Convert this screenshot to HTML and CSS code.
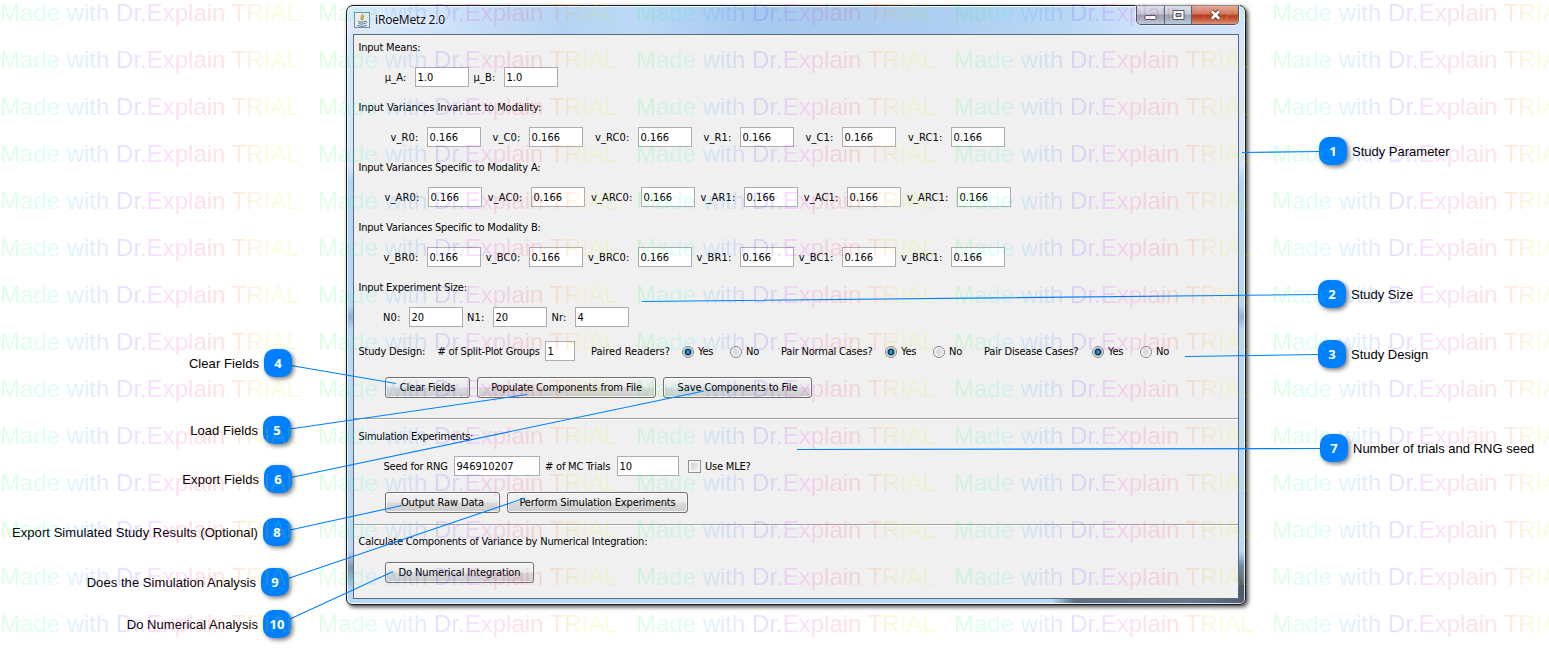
FILE: index.html
```html
<!DOCTYPE html>
<html lang="en">
<head>
<meta charset="utf-8">
<title>iRoeMetz 2.0</title>
<link rel="stylesheet" href="styles.css">
</head>
<body>
<main class="stage">
  <section class="window">
    <header class="titlebar">
      <svg class="java-icon" viewBox="0 0 16 16" width="16" height="16">
        <rect x=".5" y=".5" width="15" height="15" fill="#eceeef" stroke="#7d8b99"/>
        <path d="M8.500 2C9 4 5.500 5 7.500 8M10.500 3.500C8 5 9.500 6.500 8.500 8" fill="none" stroke="#e08a28" stroke-width="1.300"/>
        <path d="M4 9.500c2 .8 5 .8 7 0M4.500 11.500c2 .8 4 .8 6 0M3 13.500c3 1 7 1 10 0M11 9.500c2.500-.5 2 1.800-.2 2.200" fill="none" stroke="#4b7194"/>
      </svg>
      <span class="title">iRoeMetz 2.0</span>
      <div class="controls">
        <span class="control min"><svg width="13" height="13"><rect x="1" y="6.500" width="11" height="4" rx="1" fill="#fff" stroke="#53575f"/></svg></span>
        <span class="control max"><svg width="13" height="13"><path d="M1 1.500h11v9H1z" fill="#fff" stroke="#53575f"/><path d="M4 4.500h5v3H4z" fill="#aab6c6" stroke="#53575f"/></svg></span>
        <span class="control close"><svg width="13" height="13"><path d="M2.500 2l8 8M10.500 2l-8 8" stroke="#5a3d42" stroke-width="4.600"/><path d="M2.800 2.300l7.400 7.400M10.200 2.300l-7.400 7.400" stroke="#fff" stroke-width="2.700"/></svg></span>
      </div>
    </header>
    <div class="client">
      <h2 class="heading"><span>Input Means:</span></h2>
      <div class="row means"><label>μ_A:</label><span class="field">1.0</span><label>μ_B:</label><span class="field">1.0</span></div>
      <h2 class="heading wide"><span>Input Variances Invariant to Modality:</span></h2>
      <div class="row invariant"><label>v_R0:</label><span class="field">0.166</span><label>v_C0:</label><span class="field">0.166</span><label>v_RC0:</label><span class="field">0.166</span><label>v_R1:</label><span class="field">0.166</span><label>v_C1:</label><span class="field">0.166</span><label>v_RC1:</label><span class="field">0.166</span></div>
      <h2 class="heading"><span>Input Variances Specific to Modality A:</span></h2>
      <div class="row modality-a"><label>v_AR0:</label><span class="field">0.166</span><label>v_AC0:</label><span class="field">0.166</span><label>v_ARC0:</label><span class="field">0.166</span><label>v_AR1:</label><span class="field">0.166</span><label>v_AC1:</label><span class="field">0.166</span><label>v_ARC1:</label><span class="field">0.166</span></div>
      <h2 class="heading"><span>Input Variances Specific to Modality B:</span></h2>
      <div class="row modality-b"><label>v_BR0:</label><span class="field">0.166</span><label>v_BC0:</label><span class="field">0.166</span><label>v_BRC0:</label><span class="field">0.166</span><label>v_BR1:</label><span class="field">0.166</span><label>v_BC1:</label><span class="field">0.166</span><label>v_BRC1:</label><span class="field">0.166</span></div>
      <h2 class="heading"><span>Input Experiment Size:</span></h2>
      <div class="row size"><label>N0:</label><span class="field">20</span><label>N1:</label><span class="field">20</span><label>Nr:</label><span class="field">4</span></div>
      <div class="design">
        <span>Study Design:</span><span># of Split-Plot Groups</span><span class="field">1</span>
        <span class="question">Paired Readers?</span><i class="radio on"></i><span>Yes</span><i class="radio"></i><span>No</span>
        <span>Pair Normal Cases?</span><i class="radio on"></i><span>Yes</span><i class="radio"></i><span>No</span>
        <span>Pair Disease Cases?</span><i class="radio on"></i><span>Yes</span><i class="radio"></i><span>No</span>
      </div>
      <div class="buttons files"><span class="button clear">Clear Fields</span><span class="button populate">Populate Components from File</span><span class="button save">Save Components to File</span></div>
      <hr class="rule">
      <h2 class="heading sim"><span>Simulation Experiments:</span></h2>
      <div class="simulation"><span>Seed for RNG</span><span class="field">946910207</span><span class="trials"># of MC Trials</span><span class="field">10</span><i class="check"></i><span>Use MLE?</span></div>
      <div class="buttons runs"><span class="button output">Output Raw Data</span><span class="button perform">Perform Simulation Experiments</span></div>
      <hr class="rule">
      <h2 class="heading calc"><span>Calculate Components of Variance by Numerical Integration:</span></h2>
      <div class="buttons numeric"><span class="button integrate">Do Numerical Integration</span></div>
    </div>
  </section>

  <svg class="leaders" width="1549" height="649">
    <path d="M1242 152.500L1320 151.500M642 301.500L1319 294.500M1185 356.500L1319 354.500M797 449.500L1321 448.500M396 383.500L291 365.500M527 394.500L290 429M704 391L291 477.500M402 505.500L290 530M525 498L288 578.500M393 571.500L290 619"/>
  </svg>

  <div class="callout right c1"><b>1</b><span>Study Parameter</span></div>
  <div class="callout right c2"><b>2</b><span>Study Size</span></div>
  <div class="callout right c3"><b>3</b><span>Study Design</span></div>
  <div class="callout right c7"><b>7</b><span>Number of trials and RNG seed</span></div>
  <div class="callout left c4"><span>Clear Fields</span><b>4</b></div>
  <div class="callout left c5"><span>Load Fields</span><b>5</b></div>
  <div class="callout left c6"><span>Export Fields</span><b>6</b></div>
  <div class="callout left c8"><span>Export Simulated Study Results (Optional)</span><b>8</b></div>
  <div class="callout left c9"><span>Does the Simulation Analysis</span><b>9</b></div>
  <div class="callout left c10"><span>Do Numerical Analysis</span><b>10</b></div>

  <div class="watermark" id="watermark"></div>
</main>
<script src="watermark.js"></script>
</body>
</html>
```
FILE: watermark.js
```js
const layer = document.getElementById('watermark');
for (let i = 0; i < 14 * 5; i++) {
  const mark = document.createElement('span');
  mark.textContent = 'Made with Dr.Explain TRIAL';
  layer.appendChild(mark);
}
```
FILE: styles.css
```css
* { box-sizing: border-box; }
body { margin: 0; background: #fff; color: #000; }
.stage { position: relative; width: 1549px; height: 649px; overflow: hidden; padding: 5px 0 0 346px; }

.window {
  width: 900px; height: 600px; padding: 0 6px 5px;
  display: flex; flex-direction: column;
  border: 1px solid #16191d; border-radius: 7px 7px 6px 6px;
  background:
    linear-gradient(90deg, transparent 78.500%, #5e6e80 81%, #66788b 94%, #4f5f70 100%) bottom / 100% 7px no-repeat,
    linear-gradient(180deg, transparent 92%, #4b5c6b 97%) right / 8px 100% no-repeat,
    linear-gradient(90deg, #dcebf9 0, #cfe3f8 10%, #b4d3f4 24%, #bcd8f6 32%, #a6caef 45%, #abcdf0 63%, #b9d7f5 80%, #cfe4fb 90%, #cfe4fb 100%) top / 100% 28px no-repeat,
    linear-gradient(180deg, #d3e6fa 0, #d3e6fa 27%, #b3d6f8 29%, #b8d8f8 50%, #8fb0d4 52%, #b8d8f8 54%, #b8d8f8 91%, #7c98b5 94%, #b8d8f8 98%);
  box-shadow: inset 0 0 0 1px rgba(255,255,255,.8), 2px 2px 4px rgba(0,0,0,.75);
}
.titlebar { flex: none; height: 28px; display: flex; align-items: flex-start; padding-left: 1px; }
.java-icon { margin-top: 6px; }
.title { font: 12px/16px "Open Sans", sans-serif; margin: 6px 0 0 5px; letter-spacing: -.15px; text-shadow: 0 0 7px #fff, 0 0 7px #fff; }
.controls { margin-left: auto; width: 103px; height: 19px; display: flex; border: 1px solid #4c5565; border-top: 0; border-radius: 0 0 5px 5px; overflow: hidden; box-shadow: 0 0 0 1px rgba(255,255,255,.5); }
.control { display: flex; align-items: center; justify-content: center; background: linear-gradient(#d9e1eb 0, #c2ccd9 45%, #94a3b5 50%, #bccad9 100%); }
.min { width: 28px; border-right: 1px solid #596475; }
.max { width: 27px; border-right: 1px solid #596475; }
.close { flex: 1; background: linear-gradient(#e5a99e 0, #cf7465 45%, #b23420 50%, #c55a40 75%, #df9578 100%); }

.client { flex: 1; background: #f0f0f0; border: 1px solid #5c6a78; font: 11px/14px "DejaVu Sans Condensed", "DejaVu Sans", sans-serif; font-stretch: condensed; letter-spacing: -.2px; white-space: nowrap; overflow: hidden; }
.heading { margin: 0; height: 20px; padding: 6px 0 0 4.500px; font: inherit; }
.heading.wide { letter-spacing: -.05px; }
.row { display: grid; height: 40px; padding-top: 4px; align-content: center; align-items: center; }
.row label { text-align: right; padding: 1px 8.500px 0 0; letter-spacing: .15px; }
.field { height: 20px; border: 1px solid #abadb3; background: #fff; line-height: 19px; padding-left: 1.500px; letter-spacing: .05px; }
.means { grid-template-columns: 61px 54px 35px 54px; }
.invariant { grid-template-columns: 73px 54px 48px 54px 55px 54px 48px 54px 48px 54px 55px 54px; }
.modality-a { grid-template-columns: 74px 54px 49px 54px 56px 54px 49px 54px 49px 54px 56px 54px; }
.modality-b { grid-template-columns: 73px 54px 48px 54px 55px 54px 48px 54px 48px 54px 55px 54px; }
.size { grid-template-columns: 55px 54px 30px 54px 28px 54px; }
.design { height: 28px; padding: 4px 0 0 4.500px; display: grid; align-items: center; grid-template-columns: 79px 107.500px 30px 107px 16px 32px 16px 35px 104px 16px 32px 16px 35px 108px 16px 32px 16px 40px; }
.design span:not(.field) { padding-top: 1px; }
.design .question { padding-left: 16px; letter-spacing: 0; }
.radio { width: 12px; height: 12px; margin-top: 1px; border-radius: 50%; border: 1px solid #85888c; background: radial-gradient(circle, #d0d4d9 0, #e8eaed 55%, #fff 65%); }
.radio.on { background: radial-gradient(circle at 50% 50%, #52c0e8 0, #1f6f9d 22%, #0d3350 42%, #c9d2d8 56%, #f4f4f4 75%); }

.buttons { display: flex; gap: 7px; padding-left: 31px; }
.button { height: 21px; border: 1px solid #707070; border-radius: 3px; text-align: center; line-height: 20px; letter-spacing: -.13px; background: linear-gradient(#f3f3f3 0, #ebebeb 48%, #dadada 52%, #cdcdcd 100%); box-shadow: inset 0 0 0 1px rgba(255,255,255,.75); }
.files { padding-top: 14px; }
.clear { width: 85px; }
.populate { width: 179px; }
.save { width: 149px; }
.rule { border: 0; margin: 0; height: 2px; background: linear-gradient(#a0a0a0 50%, #fff 50%); }
.files + .rule { margin-top: 20px; }
.sim { padding-top: 10px; height: 36px; letter-spacing: -.3px; }
.simulation { height: 20px; padding-left: 29.500px; display: grid; align-items: center; grid-template-columns: 70.500px 86px 77px 62px 26px 60px; }
.simulation span:not(.field) { padding-top: 1px; }
.simulation .trials { padding-left: 5px; }
.check { width: 13px; height: 13px; margin-left: 9px; border: 1px solid #8e8f8f; background: linear-gradient(135deg, #c4c9d0, #f6f6f6); box-shadow: inset 0 0 0 2px #f4f4f4; }
.runs { padding-top: 16px; }
.output { width: 115px; }
.perform { width: 181px; }
.runs + .rule { margin-top: 11px; }
.calc { padding-top: 9px; height: 36px; }
.integrate { width: 149px; }

.leaders { position: absolute; left: 0; top: 0; }
.leaders path { fill: none; stroke: #0080ff; stroke-width: 1.100; }
.callout { position: absolute; height: 28px; display: flex; align-items: center; gap: 5px; white-space: nowrap; font: 13px/28px "Liberation Sans", Arial, sans-serif; }
.callout span { padding-top: 2px; }
.callout.left span { letter-spacing: .06px; }
.callout b { flex: none; width: 28px; height: 28px; border-radius: 10px; background: #0080ff; color: #fff; text-align: center; font: 700 13px/28px "Open Sans", sans-serif; box-shadow: 2px 2px 4px rgba(0,0,0,.5); }
.c1 { left: 1319px; top: 137px; }
.c2 { left: 1318px; top: 280px; }
.c3 { left: 1318px; top: 340px; }
.c7 { left: 1320px; top: 434px; }
.c4 { right: 1257px; top: 349px; }
.c5 { right: 1258px; top: 416px; }
.c6 { right: 1257px; top: 465px; }
.c8 { right: 1258px; top: 518px; }
.c9 { right: 1260px; top: 568px; }
.c10 { right: 1258px; top: 610px; }

.watermark { position: absolute; left: 0; top: -1px; display: grid; grid-template-columns: repeat(5, 318px); grid-auto-rows: 47px; opacity: .125; pointer-events: none; }
.watermark span { width: 304px; height: 32px; white-space: nowrap; font: 24px/28px "Liberation Sans", Arial, sans-serif; color: transparent; background: linear-gradient(90deg, #00ff30 0, #00ff60 7%, #00ffe0 16%, #00a0ff 24%, #2060ff 33%, #3020ff 40%, #8000ff 46%, #f000ff 53%, #ff00a0 60%, #ff0040 67%, #ff2000 74%, #ff7000 80%, #ffe000 87%, #c8ff00 93%, #a0ff00 100%); -webkit-background-clip: text; background-clip: text; }
```
